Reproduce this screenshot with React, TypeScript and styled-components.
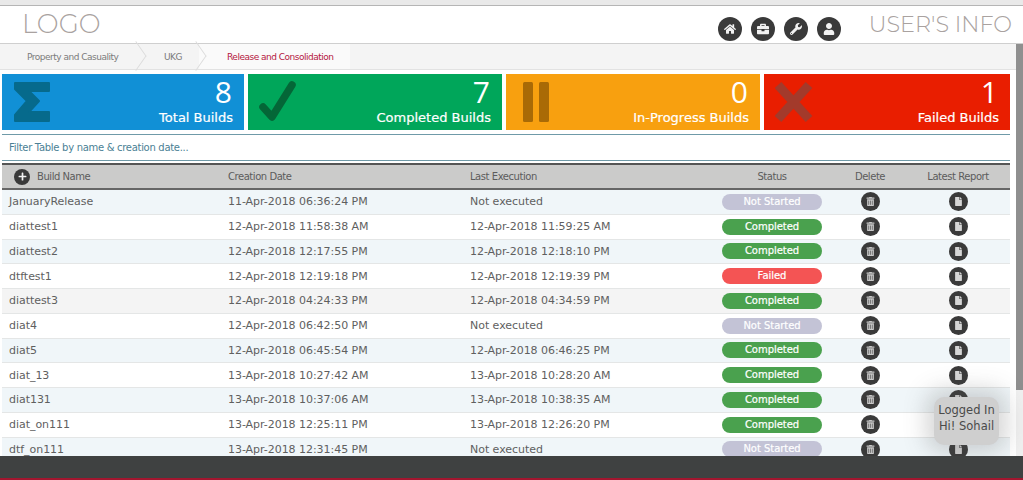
import React from "react";
import styled, { createGlobalStyle } from "styled-components";
import { FaHome, FaBriefcase, FaWrench, FaUser, FaTrashAlt, FaFile, FaPlus } from "react-icons/fa";

const GlobalStyle = createGlobalStyle`
  html, body { margin: 0; padding: 0; height: 100%; overflow: hidden; background: #fff; }
  * { box-sizing: border-box; }
  #root { height: 100%; }
`;

const Page = styled.div`
  position: relative;
  display: flex;
  flex-direction: column;
  height: 480px;
  font-family: "DejaVu Sans", Verdana, sans-serif;
  color: #555;
`;

const TopStrip = styled.div`
  height: 6px;
  background: #e9e9e9;
  border-bottom: 1px solid #b5b5b5;
  flex: none;
`;

const Header = styled.header`
  flex: none;
  height: 38px;
  display: flex;
  align-items: center;
  justify-content: space-between;
  padding: 0 11px 0 22px;
  border-bottom: 1px solid #cfcfcf;
`;

const BrandText = styled.div<{ $size: number }>`
  font-family: "Montserrat", "Lato", sans-serif;
  font-weight: 300;
  font-size: ${(p) => p.$size}px;
  line-height: 30px;
  color: #a9a2a0;
  margin-top: -2px;
`;

const HeaderRight = styled.div`
  display: flex;
  align-items: center;
`;

const NavIcons = styled.div`
  display: flex;
  gap: 9px;
  margin-right: 28px;
  margin-top: 8px;
`;

const RoundIcon = styled.span<{ $size: number; $glyph: number; $tone?: string }>`
  display: flex;
  align-items: center;
  justify-content: center;
  flex: none;
  width: ${(p) => p.$size}px;
  height: ${(p) => p.$size}px;
  border-radius: 50%;
  background: #3a3a3a;
  color: ${(p) => p.$tone || "#f2f2f2"};
  font-size: ${(p) => p.$glyph}px;
`;

const Body = styled.div`
  flex: 1;
  min-height: 0;
  display: flex;
`;

const Main = styled.main`
  flex: 1;
  min-width: 0;
  display: flex;
  flex-direction: column;
`;

const Scrollbar = styled.div`
  flex: none;
  width: 7px;
  background: #f0f0f0;
`;

const ScrollThumb = styled.div`
  height: 346px;
  background: #8f8f8f;
`;

const BreadcrumbBar = styled.nav`
  flex: none;
  height: 26px;
  display: flex;
  background: #f4f4f4;
  border-bottom: 1px solid #e2e2e2;
  width: 1016px;
`;

const Crumb = styled.span<{ $active?: boolean; $width: number; $pad: number }>`
  position: relative;
  display: flex;
  align-items: center;
  width: ${(p) => p.$width}px;
  padding-left: ${(p) => p.$pad}px;
  font-size: 9px;
  letter-spacing: -0.5px;
  white-space: nowrap;
  color: ${(p) => (p.$active ? "#b5173f" : "#7b7b7b")};
  background: ${(p) => (p.$active ? "#fafafa" : "transparent")};
`;

const CrumbArrow = styled.i`
  position: absolute;
  right: -6px;
  top: 3px;
  width: 18px;
  height: 18px;
  transform: rotate(45deg) skew(10deg, 10deg);
  border-top: 1px solid #dcdcdc;
  border-right: 1px solid #dcdcdc;
  z-index: 1;
`;

const CardRow = styled.section`
  flex: none;
  display: grid;
  grid-template-columns: 242px 254px 254px 246px;
  gap: 4px;
  padding: 4px 0 0 2px;
  height: 60px;
`;

const Card = styled.div<{ $bg: string }>`
  display: flex;
  justify-content: space-between;
  padding: 5px 11px 3px 11px;
  background: ${(p) => p.$bg};
  color: #fff;
`;

const CardIcon = styled.svg`
  width: 38px;
  height: 44px;
  flex: none;
`;

const CardText = styled.div`
  display: flex;
  flex-direction: column;
  align-items: flex-end;
`;

const CardNumber = styled.div`
  font-family: "Open Sans", sans-serif;
  font-size: 30px;
  line-height: 26px;
  padding-right: 1px;
`;

const CardLabel = styled.div`
  font-size: 13px;
  line-height: 18px;
  margin-top: 4px;
  -webkit-text-stroke: 0.2px #fff;
`;

const FilterBar = styled.div`
  flex: none;
  height: 27px;
  margin: 4px 6px 0 2px;
  padding-left: 7px;
  display: flex;
  align-items: center;
  font-size: 10px;
  letter-spacing: -0.3px;
  color: #4b7f95;
  border-top: 1px solid #6f9aa8;
  border-bottom: 1px solid #6f9aa8;
`;

const TableWrap = styled.div`
  flex: 1;
  min-height: 0;
  overflow: hidden;
  margin: 2px 6px 0 2px;
`;

const Grid = styled.div`
  display: grid;
  grid-template-columns: 226px 242px 252px 100px 96px 80px;
  align-items: center;
`;

const HeadRow = styled(Grid)`
  height: 27px;
  background: #cbcbca;
  border-top: 2px solid #555;
  border-bottom: 2px solid #666;
  font-size: 10px;
  letter-spacing: -0.45px;
  color: #5c5c5c;
`;

const BodyRow = styled(Grid)<{ $tint: string }>`
  height: 24.75px;
  background: ${(p) => p.$tint};
  border-bottom: 1px solid #e4e6e6;
  font-size: 11px;
  letter-spacing: -0.04px;
  color: #5f5f5f;
`;

const NameCell = styled.div`
  padding-left: 7px;
  white-space: nowrap;
`;

const HeadName = styled.div`
  display: flex;
  align-items: center;
  gap: 7px;
  padding-left: 12px;
`;

const Cell = styled.div`
  white-space: nowrap;
`;

const CenterCell = styled.div`
  display: flex;
  justify-content: center;
`;

const StatusPill = styled.span<{ $bg: string }>`
  display: block;
  width: 100px;
  height: 16px;
  line-height: 16px;
  border-radius: 8px;
  text-align: center;
  font-size: 10px;
  -webkit-text-stroke: 0.2px #fff;
  color: #fff;
  background: ${(p) => p.$bg};
`;

const Footer = styled.footer`
  flex: none;
  height: 24px;
  background: #3f4141;
  border-bottom: 2px solid #a3162f;
  position: relative;
  z-index: 2;
`;

const LoggedBubble = styled.div`
  position: absolute;
  left: 934px;
  top: 397px;
  width: 65px;
  height: 48px;
  padding-bottom: 7px;
  display: flex;
  flex-direction: column;
  align-items: center;
  justify-content: center;
  border-radius: 10px;
  background: #cfcfcf;
  box-shadow: 0 0 22px 8px rgba(90, 90, 90, 0.25);
  font-size: 11.5px;
  line-height: 16px;
  color: #4a4a4a;
  white-space: nowrap;
  z-index: 1;
`;

const statusColors: Record<string, string> = {
  "Not Started": "#c3c3d6",
  Completed: "#4aa14e",
  Failed: "#f45454",
};

const builds = [
  ["JanuaryRelease", "11-Apr-2018 06:36:24 PM", "Not executed", "Not Started"],
  ["diattest1", "12-Apr-2018 11:58:38 AM", "12-Apr-2018 11:59:25 AM", "Completed"],
  ["diattest2", "12-Apr-2018 12:17:55 PM", "12-Apr-2018 12:18:10 PM", "Completed"],
  ["dtftest1", "12-Apr-2018 12:19:18 PM", "12-Apr-2018 12:19:39 PM", "Failed"],
  ["diattest3", "12-Apr-2018 04:24:33 PM", "12-Apr-2018 04:34:59 PM", "Completed"],
  ["diat4", "12-Apr-2018 06:42:50 PM", "Not executed", "Not Started"],
  ["diat5", "12-Apr-2018 06:45:54 PM", "12-Apr-2018 06:46:25 PM", "Completed"],
  ["diat_13", "13-Apr-2018 10:27:42 AM", "13-Apr-2018 10:28:20 AM", "Completed"],
  ["diat131", "13-Apr-2018 10:37:06 AM", "13-Apr-2018 10:38:35 AM", "Completed"],
  ["diat_on111", "13-Apr-2018 12:25:11 PM", "13-Apr-2018 12:26:20 PM", "Completed"],
  ["dtf_on111", "13-Apr-2018 12:31:45 PM", "Not executed", "Not Started"],
];

const rowTints = ["#f0f6f9", "#ffffff", "#f0f6f9", "#ffffff", "#f4f4f4", "#ffffff", "#f0f6f9", "#ffffff", "#f0f6f9", "#ffffff", "#f0f6f9"];

function App() {
  return (
    <Page>
      <GlobalStyle />
      <TopStrip />
      <Header>
        <BrandText $size={26}>LOGO</BrandText>
        <HeaderRight>
          <NavIcons>
            <RoundIcon $size={24} $glyph={12}><FaHome /></RoundIcon>
            <RoundIcon $size={24} $glyph={12}><FaBriefcase /></RoundIcon>
            <RoundIcon $size={24} $glyph={12}><FaWrench /></RoundIcon>
            <RoundIcon $size={24} $glyph={12}><FaUser /></RoundIcon>
          </NavIcons>
          <BrandText $size={22.3}>USER'S INFO</BrandText>
        </HeaderRight>
      </Header>
      <Body>
        <Main>
          <BreadcrumbBar>
            <Crumb $width={139} $pad={27}>Property and Casuality<CrumbArrow /></Crumb>
            <Crumb $width={60} $pad={25}>UKG<CrumbArrow /></Crumb>
            <Crumb $width={151} $pad={28} $active>Release and Consolidation</Crumb>
          </BreadcrumbBar>
          <CardRow>
            <Card $bg="#1190d6">
              <CardIcon viewBox="0 0 38 44">
                <path d="M2 4 H36 V12 H16 L26 22 L16 33 H36 V42 H2 V36 L14 22 L2 10 Z" fill="#066a8c" stroke="#066a8c" strokeWidth="2" strokeLinejoin="round" />
              </CardIcon>
              <CardText>
                <CardNumber>8</CardNumber>
                <CardLabel>Total Builds</CardLabel>
              </CardText>
            </Card>
            <Card $bg="#00a65a">
              <CardIcon viewBox="0 0 38 44">
                <path d="M4 28 L13 38 L33 6" fill="none" stroke="#046637" strokeWidth="7.5" strokeLinecap="round" strokeLinejoin="round" />
              </CardIcon>
              <CardText>
                <CardNumber>7</CardNumber>
                <CardLabel>Completed Builds</CardLabel>
              </CardText>
            </Card>
            <Card $bg="#f8a00f">
              <CardIcon viewBox="0 0 38 44">
                <rect x="6" y="3" width="10" height="40" rx="1.5" fill="#a96a06" />
                <rect x="22" y="3" width="10" height="40" rx="1.5" fill="#a96a06" />
              </CardIcon>
              <CardText>
                <CardNumber>0</CardNumber>
                <CardLabel>In-Progress Builds</CardLabel>
              </CardText>
            </Card>
            <Card $bg="#e91e00">
              <CardIcon viewBox="0 0 38 44">
                <path d="M3 6 L34 40 M34 6 L3 40" fill="none" stroke="#a33a2b" strokeWidth="9" strokeLinejoin="round" />
              </CardIcon>
              <CardText>
                <CardNumber>1</CardNumber>
                <CardLabel>Failed Builds</CardLabel>
              </CardText>
            </Card>
          </CardRow>
          <FilterBar>Filter Table by name &amp; creation date...</FilterBar>
          <TableWrap>
            <HeadRow>
              <HeadName>
                <RoundIcon $size={16} $glyph={9}><FaPlus /></RoundIcon>
                Build Name
              </HeadName>
              <Cell>Creation Date</Cell>
              <Cell>Last Execution</Cell>
              <CenterCell>Status</CenterCell>
              <CenterCell>Delete</CenterCell>
              <CenterCell>Latest Report</CenterCell>
            </HeadRow>
            {builds.map(([name, created, executed, status], i) => (
              <BodyRow key={name} $tint={rowTints[i]}>
                <NameCell>{name}</NameCell>
                <Cell>{created}</Cell>
                <Cell>{executed}</Cell>
                <CenterCell>
                  <StatusPill $bg={statusColors[status]}>{status}</StatusPill>
                </CenterCell>
                <CenterCell>
                  <RoundIcon $size={19} $glyph={9} $tone="#c9c9c9"><FaTrashAlt /></RoundIcon>
                </CenterCell>
                <CenterCell>
                  <RoundIcon $size={19} $glyph={9} $tone="#d6d6d6"><FaFile /></RoundIcon>
                </CenterCell>
              </BodyRow>
            ))}
          </TableWrap>
        </Main>
        <Scrollbar>
          <ScrollThumb />
        </Scrollbar>
      </Body>
      <Footer />
      <LoggedBubble>
        <span>Logged In</span>
        <span>Hi! Sohail</span>
      </LoggedBubble>
    </Page>
  );
}

export default App;
